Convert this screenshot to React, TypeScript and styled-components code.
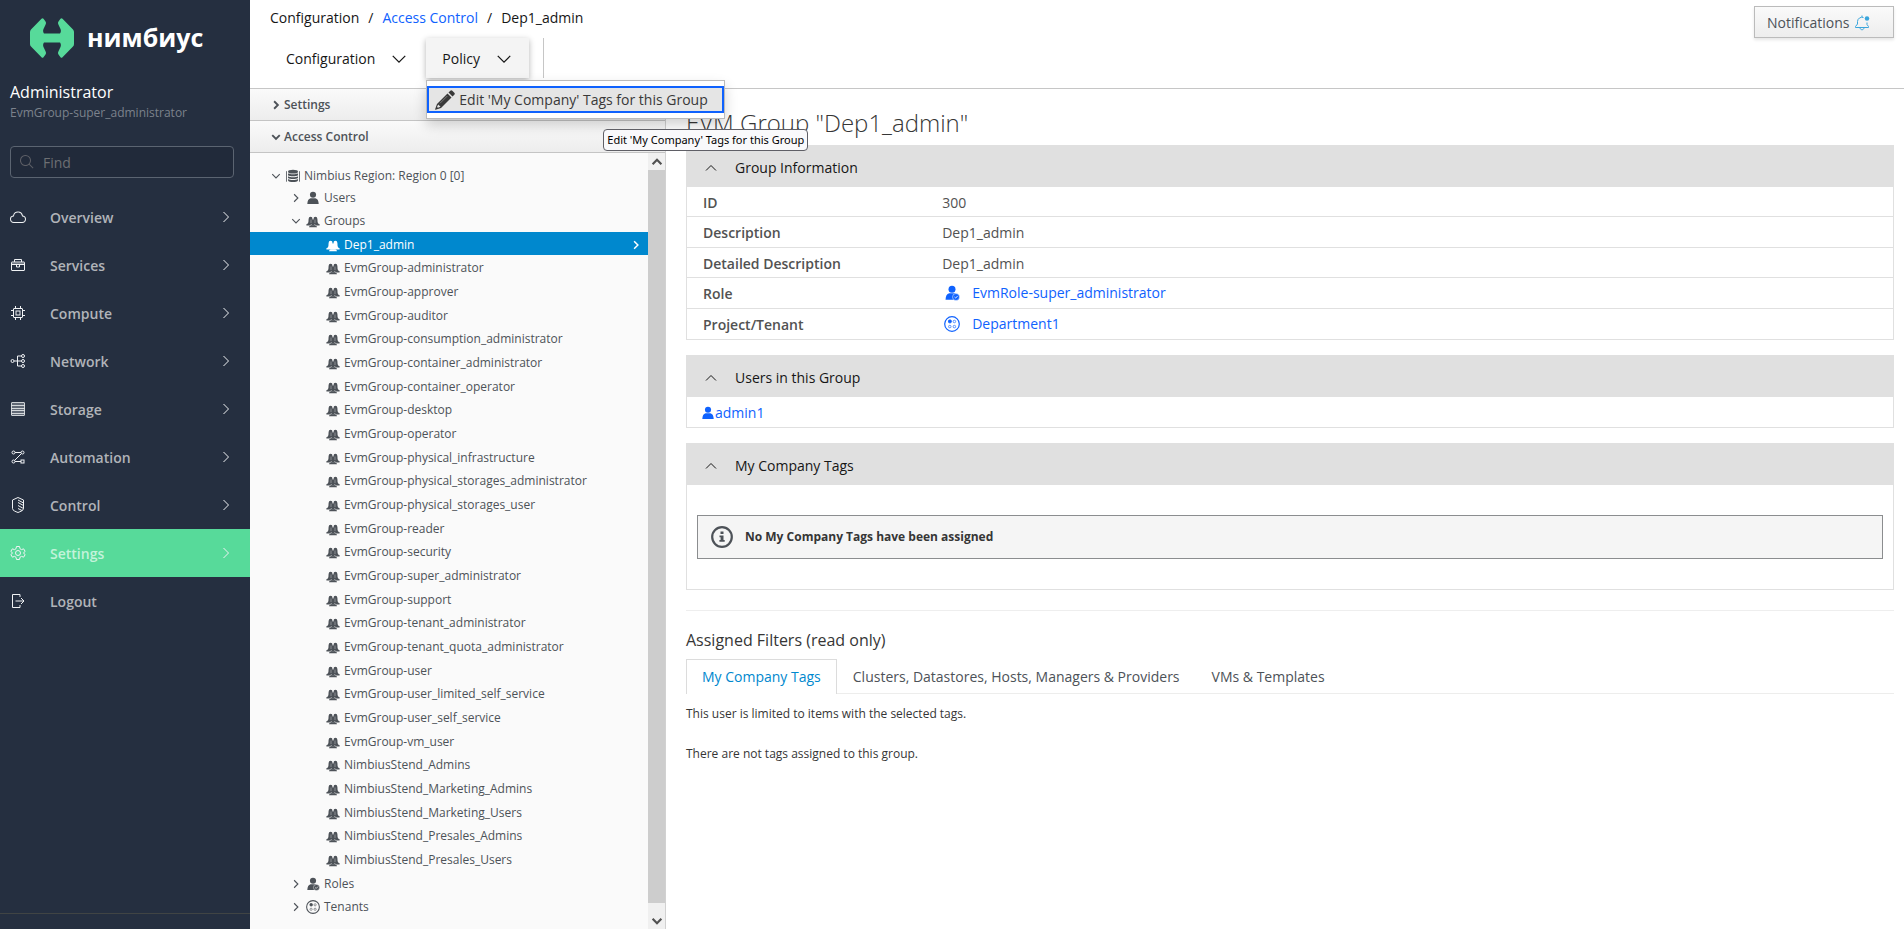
import React, { useState } from "react";
import styled, { createGlobalStyle, css } from "styled-components";

const GlobalStyle = createGlobalStyle`
  *, *::before, *::after { box-sizing: border-box; }
  body {
    margin: 0;
    background: #fff;
    color: #393f44;
    font-family: "Open Sans", sans-serif;
    font-size: 12px;
    line-height: 20px;
  }
  button, input { font: inherit; }
  h1, h2, ul, p, nav, ol { margin: 0; padding: 0; }
  ul, ol { list-style: none; }
  a { color: #0f62fe; text-decoration: none; }
  svg { display: block; flex: none; }
`;

/* ---------- icons ---------- */

type IconProps = { size?: number; className?: string };

const Icon = ({
  size = 16,
  box = 32,
  children,
}: IconProps & { box?: number; children: React.ReactNode }) => (
  <svg width={size} height={size} viewBox={`0 0 ${box} ${box}`} fill="none" stroke="none" aria-hidden="true">
    {children}
  </svg>
);

const line = { stroke: "currentColor", strokeWidth: 2, fill: "none" } as const;

const CloudIcon = () => (
  <Icon>
    <path
      fill="currentColor"
      d="M16,7a7.66,7.66,0,0,1,1.51.15,8,8,0,0,1,6.35,6.34l.26,1.35,1.35.24a5.5,5.5,0,0,1-1,10.92H7.5a5.5,5.5,0,0,1-1-10.92l1.34-.24.26-1.35A8,8,0,0,1,16,7m0-2a10,10,0,0,0-9.83,8.12A7.5,7.5,0,0,0,7.49,28h17a7.5,7.5,0,0,0,1.32-14.88A10,10,0,0,0,16,5Z"
    />
  </Icon>
);
const ToolboxIcon = () => (
  <Icon>
    <g {...line}>
      <rect x="3" y="10" width="26" height="17" rx="1" />
      <path d="M9 10V5h14v5M3 15h26M13 15v5h6v-5" />
      <path d="M3 12.500h26" strokeOpacity=".5" />
    </g>
  </Icon>
);
const ChipIcon = () => (
  <Icon>
    <g {...line}>
      <rect x="7" y="7" width="18" height="18" rx="1" />
      <rect x="12" y="12" width="8" height="8" />
      <path d="M11 7V2M21 7V2M11 30v-5M21 30v-5M7 11H2M7 21H2M30 11h-5M30 21h-5" />
    </g>
  </Icon>
);
const NetworkIcon = () => (
  <Icon>
    <g {...line}>
      <circle cx="5" cy="16" r="3" />
      <circle cx="26" cy="6" r="3" />
      <circle cx="26" cy="16" r="3" />
      <circle cx="26" cy="26" r="3" />
      <path d="M8 16h15M23 6h-8v20h8" />
    </g>
  </Icon>
);
const StorageIcon = () => (
  <Icon>
    <rect x="3" y="3" width="26" height="26" fill="currentColor" fillOpacity=".3" />
    <g {...line} strokeOpacity=".8">
      <rect x="3" y="3" width="26" height="26" rx="1" />
      <path d="M3 9h26M3 15h26M3 19h26M3 25h26" />
    </g>
  </Icon>
);
const FlowIcon = () => (
  <Icon>
    <g {...line}>
      <circle cx="7" cy="7" r="3" />
      <circle cx="25" cy="7" r="3" />
      <circle cx="7" cy="25" r="3" />
      <rect x="22" y="22" width="6" height="6" />
      <path d="M10 7h12M10 25h12M23 9L9 23" />
    </g>
  </Icon>
);
const ShieldIcon = () => (
  <Icon>
    <g {...line}>
      <path d="M16 1L5 6v17c0 4 6 6 11 8 5-2 11-4 11-8V6z" />
      <path d="M16 6l11 6M16 11l11 6M16 17l11 6M16 23l8 4" />
    </g>
  </Icon>
);
const GearIcon = () => (
  <Icon>
    <g {...line}>
      <path
        strokeLinejoin="round"
        d="M13 3h6l1 4.500 3 1.700 4.300-1.500 3 5.200-3.500 3.100 3.500 3.100-3 5.200L23 22.800 20 24.500 19 29h-6l-1-4.500-3-1.700-4.300 1.500-3-5.200L5.200 16 1.700 12.900l3-5.200L9 9.200l3-1.700z"
      />
      <circle cx="16" cy="16" r="5" />
    </g>
  </Icon>
);
const LogoutIcon = () => (
  <Icon>
    <path {...line} d="M20 8V3H5v26h15v-5M11 16h17M22 10l6 6-6 6" />
  </Icon>
);
const SearchIcon = () => (
  <Icon>
    <path
      fill="currentColor"
      d="M29,27.586l-7.552-7.552a11.018,11.018,0,1,0-1.414,1.414L27.586,29ZM4,13a9,9,0,1,1,9,9A9.01,9.01,0,0,1,4,13Z"
    />
  </Icon>
);

const turns = { right: 0, down: 90, up: -90 };
const Chevron = ({ dir, size = 16, weight = 2 }: { dir: keyof typeof turns; size?: number; weight?: number }) => (
  <Icon size={size}>
    <path
      d="M11 6l10 10-10 10"
      stroke="currentColor"
      strokeWidth={weight}
      transform={`rotate(${turns[dir]} 16 16)`}
    />
  </Icon>
);

const BellIcon = () => (
  <Icon>
    <path
      {...line}
      d="M19 5A9 9 0 0 0 7 13v5l-4 5v2h26v-2l-3-4V15M12 25c0 6 8 6 8 0M16 4V1"
    />
    <circle cx="26" cy="7" r="4.500" fill="currentColor" />
  </Icon>
);
const PencilIcon = () => (
  <Icon size={20} box={20}>
    <g fill="currentColor">
      <path d="M13.500 2.500L15.300.7q1-1 2 0l2 2q1 1 0 2L17.500 6.500z" />
      <path d="M12.500 3.500l4 4L6 18l-5.500 1.800L0 19.500 2 14z" />
    </g>
    <path d="M3.200 14.500l2.300 2.300-2.600 1-.9-.9z" fill="#e5e5e5" />
    <path d="M12.300 6L5 13.300" stroke="#8b8b8b" strokeWidth=".8" />
  </Icon>
);
const PersonShape = () => (
  <g fill="currentColor">
    <circle cx="8" cy="4.300" r="3.500" />
    <path d="M1.500 14.800c.2-3.800 1.300-5.900 3.700-6.500h5.600c2.400.6 3.500 2.700 3.700 6.500z" />
  </g>
);
const UserIcon = ({ size = 14 }: IconProps) => (
  <Icon size={size} box={16}>
    <PersonShape />
  </Icon>
);
const RoleIcon = ({ size = 14 }: IconProps) => (
  <Icon size={size} box={16}>
    <PersonShape />
    <circle cx="12" cy="12" r="3.500" fill="currentColor" stroke="#fff" strokeWidth=".5" />
    <path d="M10.500 12l1.200 1.100 2-2.200" stroke="#fff" strokeWidth=".8" />
  </Icon>
);
const GroupIcon = () => (
  <Icon size={14} box={14}>
    <g fill="currentColor">
      <path d="M2.600 5q0-2.300 2-2.300T6.500 5l.5 1 .5-1q0-2.300 1.900-2.300t2 2.300l.2 3q.1 1.700 2 2.200v1.300H.4v-1.300q1.900-.5 2-2.200z" />
      <path d="M3 13.200q0-1.400 2-1.900h4q2 .5 2 1.900z" />
    </g>
    <path d="M5 5.500v3.500M9 5.500v3.500M4 11.400l2-1.200M10 11.400l-2-1.200" stroke="#fff" strokeOpacity=".45" strokeWidth=".8" />
  </Icon>
);
const TenantIcon = ({ size = 14 }: IconProps) => (
  <Icon size={size} box={16}>
    <g stroke="currentColor">
      <circle cx="8" cy="8" r="7.300" strokeWidth="1.200" />
      <rect x="4.500" y="4" width="2.800" height="2.800" rx="1" fill="currentColor" />
      <g strokeOpacity=".75" strokeWidth=".9">
        <rect x="9.200" y="4.300" width="2.400" height="2.400" rx="1" />
        <rect x="4.600" y="9.400" width="2.400" height="2.400" rx="1" />
        <rect x="9.200" y="9.400" width="2.400" height="2.400" rx="1" />
      </g>
    </g>
  </Icon>
);
const RegionIcon = () => (
  <Icon size={14} box={16}>
    <g fill="currentColor">
      <ellipse cx="8" cy="3" rx="5.700" ry="2.200" />
      <path d="M2.300 4.800c2 1.700 9.400 1.700 11.400 0v2.300c-2 1.700-9.400 1.700-11.400 0z" />
      <path d="M2.300 8.200c2 1.700 9.400 1.700 11.400 0v2c-2 1.700-9.400 1.700-11.400 0z" />
      <path d="M2.300 11.300c2 1.700 9.400 1.700 11.400 0v1.800c-1 2.400-10.400 2.400-11.400 0z" />
    </g>
    <path d="M.5 2.500v12M15.500 2.500v12" stroke="currentColor" />
  </Icon>
);
const InfoIcon = () => (
  <Icon size={22} box={22}>
    <circle cx="11" cy="11" r="9.800" stroke="currentColor" strokeWidth="2.200" />
    <path d="M9.500 5.500h3v2.500h-3zM8.500 9.500h4V14h1.200v1.700H8.400V14h1.200v-2.800H8.500z" fill="currentColor" />
  </Icon>
);

/* ---------- sidebar ---------- */

const Page = styled.div`
  display: grid;
  grid-template-columns: 250px minmax(0, 1fr);
  min-height: 100vh;
`;
const Sidebar = styled.aside`
  display: flex;
  flex-direction: column;
  background: #252f40;
  color: #b1b4b9;
`;
const Brand = styled.a`
  display: flex;
  align-items: center;
  gap: 13px;
  height: 76px;
  padding-left: 30px;
  color: #fff;
  font-size: 25px;
  line-height: 40px;
  font-weight: 700;
`;
const BrandName = styled.span`
  padding-bottom: 2px;
`;
const Account = styled.div`
  height: 70px;
  padding: 4px 10px 0;
`;
const AccountName = styled.div`
  color: #fff;
  font-size: 16px;
  line-height: 24px;
`;
const AccountGroup = styled.div`
  color: #7c828c;
  font-size: 12px;
  line-height: 18px;
`;
const SearchBox = styled.label`
  display: flex;
  align-items: center;
  gap: 8px;
  height: 32px;
  margin: 0 16px 15px 10px;
  padding: 0 8px;
  border: 1px solid #5b6471;
  border-radius: 4px;
  background: #212a3a;
  color: #5d5f66;
`;
const SearchInput = styled.input`
  flex: 1;
  min-width: 0;
  padding: 1px 0 0;
  border: 0;
  outline: 0;
  background: none;
  color: #fff;
  font-size: 14px;
  &::placeholder { color: #6d6f73; opacity: 1; }
`;
const NavItem = styled.a<{ $active?: boolean }>`
  display: grid;
  grid-template-columns: 16px 1fr 16px;
  column-gap: 24px;
  align-items: center;
  height: 48px;
  padding: 0 16px 0 10px;
  font-size: 14px;
  font-weight: 600;
  color: ${(p) => (p.$active ? "#c3f3da" : "#b1b4b9")};
  background: ${(p) => (p.$active ? "#57da9a" : "transparent")};
  svg { color: #f0f2f4; }
  span { padding-top: 2px; }
`;
const SidebarFoot = styled.div`
  height: 16px;
  margin-top: auto;
  border-top: 1px solid #404444;
`;

const navItems: { label: string; icon: React.ReactNode; active?: boolean; leaf?: boolean }[] = [
  { label: "Overview", icon: <CloudIcon /> },
  { label: "Services", icon: <ToolboxIcon /> },
  { label: "Compute", icon: <ChipIcon /> },
  { label: "Network", icon: <NetworkIcon /> },
  { label: "Storage", icon: <StorageIcon /> },
  { label: "Automation", icon: <FlowIcon /> },
  { label: "Control", icon: <ShieldIcon /> },
  { label: "Settings", icon: <GearIcon />, active: true },
  { label: "Logout", icon: <LogoutIcon />, leaf: true },
];

const Logo = () => (
  <svg width="44" height="40" viewBox="0 0 44 40" aria-hidden="true">
    <path
      fill="#57da9a"
      d="M0 14Q0 12.500 1 11.500L11.500.8q1-1 2 0l2 2.600q1 1.600 0 3.400l-2 4.200q-1 2.500.5 4.500h16q1.500-2 .5-4.500l-2-4.200q-1-1.800 0-3.400l2-2.600q1-1 2 0L43 11.500q1 1 1 2.500v12q0 1.500-1 2.500L32.500 39.200q-1 1-2 0l-2-2.600q-1-1.600 0-3.400l2-4.200q1-2.500-.5-4.500H14q-1.500 2-.5 4.500l2 4.200q1 1.800 0 3.400l-2 2.600q-1 1-2 0L1 28.500q-1-1-1-2.500z"
    />
  </svg>
);

/* ---------- top bar ---------- */

const Workspace = styled.div`
  display: flex;
  flex-direction: column;
  min-width: 0;
`;
const TopBar = styled.header`
  display: flex;
  justify-content: space-between;
  align-items: flex-start;
  height: 89px;
  padding: 6px 10px 0 20px;
  border-bottom: 1px solid #c6c6c6;
`;
const Crumbs = styled.ol`
  display: flex;
  gap: 9px;
  padding-top: 2px;
  font-size: 14px;
  color: #161616;
`;
const Toolbar = styled.div`
  display: flex;
  gap: 2px;
  height: 40px;
  margin-top: 10px;
`;
const ToolButton = styled.button<{ $open?: boolean }>`
  display: flex;
  align-items: center;
  gap: 14px;
  height: 40px;
  padding: 2px 15px 0 16px;
  border: 0;
  background: ${(p) => (p.$open ? "#f4f4f4" : "transparent")};
  color: #161616;
  font-size: 14px;
  ${(p) => p.$open && css`box-shadow: 0 2px 6px rgba(0, 0, 0, 0.3);`}
`;
const MenuAnchor = styled.div`
  position: relative;
  margin-right: 12px;
`;
const Menu = styled.div`
  position: absolute;
  top: 42px;
  left: 0;
  z-index: 2;
  padding: 5px 0;
  border: 1px solid #bbb;
  background: #fff;
  box-shadow: 0 6px 12px rgba(0, 0, 0, 0.18);
`;
const MenuItem = styled.button`
  display: flex;
  align-items: center;
  gap: 4px;
  height: 27px;
  padding: 0 14px 0 6px;
  border: 2px solid #0f62fe;
  background: #e5e5e5;
  color: #393939;
  font-size: 14px;
  white-space: nowrap;
`;
const Tooltip = styled.div`
  position: absolute;
  top: 91px;
  left: 177px;
  z-index: 3;
  padding: 0 3px;
  border: 1px solid #5f5f66;
  border-radius: 4px;
  background: #f9f9fb;
  color: #000;
  font-family: "Noto Sans", "Open Sans", sans-serif;
  font-size: 11px;
  white-space: nowrap;
`;
const ToolDivider = styled.div`
  width: 1px;
  background: #c6c6c6;
`;
const Notifications = styled.button`
  display: flex;
  align-items: center;
  gap: 5px;
  width: 140px;
  height: 32px;
  padding: 2px 12px 0;
  border: 1px solid #bbb;
  background: linear-gradient(#fafafa, #ededed);
  box-shadow: 0 2px 3px rgba(3, 3, 3, 0.1);
  color: #4d5258;
  font-size: 14px;
  svg { color: #39a5dc; }
`;

/* ---------- explorer ---------- */

const Split = styled.div`
  flex: 1;
  display: grid;
  grid-template-columns: 416px minmax(0, 1fr);
`;
const Explorer = styled.section`
  display: flex;
  flex-direction: column;
  border-right: 1px solid #d1d1d1;
  background: #fafafa;
  color: #4d5258;
`;
const AccordionHead = styled.button`
  display: flex;
  align-items: center;
  gap: 2px;
  height: 32px;
  padding: 0 20px;
  border: 0;
  border-bottom: 1px solid #c4c4c4;
  background: linear-gradient(#fafafa, #ededed);
  color: #4d5258;
  font-size: 12px;
  font-weight: 600;
`;
const TreePane = styled.div`
  flex: 1;
  display: grid;
  grid-template-columns: minmax(0, 1fr) 17px;
`;
const Tree = styled.ul`
  padding: 11px 0;
`;
const Row = styled.div<{ $level: number; $tall?: boolean; $selected?: boolean }>`
  display: flex;
  align-items: center;
  gap: 4px;
  height: ${(p) => (p.$tall ? "24px" : "100%")};
  min-height: 22px;
  padding: 2px 6px 0 ${(p) => 20 + p.$level * 20}px;
  ${(p) => p.$selected && css`background: #0088ce; color: #fff;`}
`;
const RowLabel = styled.span`
  flex: 1;
  white-space: nowrap;
`;
const ToggleSlot = styled.span`
  display: flex;
  width: 12px;
`;
const GroupRows = styled.ul`
  display: grid;
  grid-auto-rows: 23px 24px 24px;
`;
const ScrollTrack = styled.div`
  display: flex;
  flex-direction: column;
  align-items: center;
  background: #f0f0f0;
  color: #505050;
`;
const ScrollEnd = styled.div`
  display: flex;
  align-items: center;
  height: 17px;
`;
const ScrollThumb = styled.div`
  flex: 1;
  width: 100%;
  margin-bottom: 9px;
  background: #cdcdcd;
`;

const groups = [
  "Dep1_admin",
  "EvmGroup-administrator",
  "EvmGroup-approver",
  "EvmGroup-auditor",
  "EvmGroup-consumption_administrator",
  "EvmGroup-container_administrator",
  "EvmGroup-container_operator",
  "EvmGroup-desktop",
  "EvmGroup-operator",
  "EvmGroup-physical_infrastructure",
  "EvmGroup-physical_storages_administrator",
  "EvmGroup-physical_storages_user",
  "EvmGroup-reader",
  "EvmGroup-security",
  "EvmGroup-super_administrator",
  "EvmGroup-support",
  "EvmGroup-tenant_administrator",
  "EvmGroup-tenant_quota_administrator",
  "EvmGroup-user",
  "EvmGroup-user_limited_self_service",
  "EvmGroup-user_self_service",
  "EvmGroup-vm_user",
  "NimbiusStend_Admins",
  "NimbiusStend_Marketing_Admins",
  "NimbiusStend_Marketing_Users",
  "NimbiusStend_Presales_Admins",
  "NimbiusStend_Presales_Users",
];

type NodeProps = {
  level: number;
  icon: React.ReactNode;
  label: string;
  toggle?: "right" | "down";
  tall?: boolean;
  selected?: boolean;
};
const TreeNode = ({ level, icon, label, toggle, tall, selected }: NodeProps) => (
  <Row $level={level} $tall={tall} $selected={selected}>
    <ToggleSlot>{toggle && <Chevron dir={toggle} size={12} weight={3} />}</ToggleSlot>
    {icon}
    <RowLabel>{label}</RowLabel>
    {selected && <Chevron dir="right" size={12} weight={4} />}
  </Row>
);

/* ---------- main content ---------- */

const Content = styled.main`
  padding: 14px 10px 20px 20px;
`;
const Title = styled.h1`
  margin-bottom: 2px;
  color: #363636;
  font-size: 24px;
  line-height: 40px;
  font-weight: 300;
`;
const Card = styled.section`
  margin-bottom: 15px;
  border: 1px solid #e0e0e0;
  border-top: 0;
`;
const CardHead = styled.button`
  display: flex;
  align-items: center;
  gap: 16px;
  width: 100%;
  height: 42px;
  padding: 3px 16px 0;
  border: 0;
  background: #e0e0e0;
  color: #161616;
  font-size: 14px;
`;
const DataTable = styled.table`
  width: 100%;
  border-collapse: separate;
  border-spacing: 0;
  font-size: 14px;
  color: #525252;
  th, td {
    height: 31px;
    padding: 2px 14px 0;
    border-bottom: 1px solid #e0e0e0;
    text-align: left;
  }
  th { width: 20%; padding-left: 16px; font-weight: 600; }
  tr:nth-child(odd) > * { height: 30px; }
  tr:last-child > * { border-bottom: 0; }
`;
const FactLink = styled.a`
  display: flex;
  align-items: center;
  gap: 12px;
  padding: 0 0 2px 2px;
`;
const UserLink = styled.a`
  display: flex;
  align-items: center;
`;
const EmptyBody = styled.div`
  padding: 30px 10px;
`;
const Notice = styled.div`
  display: flex;
  align-items: center;
  gap: 12px;
  height: 44px;
  padding: 0 13px;
  border: 1px solid #8b8d8f;
  background: #f5f5f5;
  color: #4d5258;
`;
const NoticeText = styled.strong`
  color: #363636;
  font-weight: 700;
`;
const Rule = styled.hr`
  margin: 20px 0 17px;
  border: 0;
  border-top: 1px solid #eee;
`;
const SubTitle = styled.h2`
  margin-bottom: 7px;
  color: #363636;
  font-size: 16px;
  line-height: 24px;
  font-weight: 400;
`;
const Tabs = styled.div`
  display: flex;
  height: 35px;
  border-bottom: 1px solid #ededec;
`;
const Tab = styled.button<{ $active?: boolean }>`
  height: 35px;
  padding: 0 15px;
  border: 1px solid transparent;
  border-bottom: 0;
  background: none;
  color: #4d5258;
  font-size: 14px;
  ${(p) =>
    p.$active &&
    css`
      border-color: #dcdcdc;
      background: #fff;
      color: #0088ce;
    `}
`;
const Note = styled.p`
  margin: 10px 0 20px;
  color: #363636;
`;

const facts: [string, React.ReactNode][] = [
  ["ID", "300"],
  ["Description", "Dep1_admin"],
  ["Detailed Description", "Dep1_admin"],
  [
    "Role",
    <FactLink href="#role" key="role">
      <RoleIcon size={16} />
      EvmRole-super_administrator
    </FactLink>,
  ],
  [
    "Project/Tenant",
    <FactLink href="#tenant" key="tenant">
      <TenantIcon size={16} />
      Department1
    </FactLink>,
  ],
];

const tabNames = ["My Company Tags", "Clusters, Datastores, Hosts, Managers & Providers", "VMs & Templates"];

export default function App() {
  const [tab, setTab] = useState(tabNames[0]);
  return (
    <>
      <GlobalStyle />
      <Page>
        <Sidebar>
          <Brand href="#home">
            <Logo />
            <BrandName>нимбиус</BrandName>
          </Brand>
          <Account>
            <AccountName>Administrator</AccountName>
            <AccountGroup>EvmGroup-super_administrator</AccountGroup>
          </Account>
          <SearchBox>
            <SearchIcon />
            <SearchInput type="search" placeholder="Find" aria-label="Find" />
          </SearchBox>
          <nav>
            {navItems.map((item) => (
              <NavItem key={item.label} href={`#${item.label}`} $active={item.active}>
                {item.icon}
                <span>{item.label}</span>
                {!item.leaf && <Chevron dir="right" />}
              </NavItem>
            ))}
          </nav>
          <SidebarFoot />
        </Sidebar>

        <Workspace>
          <TopBar>
            <div>
              <Crumbs>
                <li>Configuration</li>
                <li>/</li>
                <li>
                  <a href="#access">Access Control</a>
                </li>
                <li>/</li>
                <li>Dep1_admin</li>
              </Crumbs>
              <Toolbar>
                <ToolButton>
                  Configuration
                  <Chevron dir="down" size={20} />
                </ToolButton>
                <MenuAnchor>
                  <ToolButton $open aria-expanded="true">
                    Policy
                    <Chevron dir="down" size={20} />
                  </ToolButton>
                  <Menu role="menu">
                    <MenuItem role="menuitem">
                      <PencilIcon />
                      Edit 'My Company' Tags for this Group
                    </MenuItem>
                  </Menu>
                  <Tooltip role="tooltip">Edit 'My Company' Tags for this Group</Tooltip>
                </MenuAnchor>
                <ToolDivider />
              </Toolbar>
            </div>
            <Notifications>
              Notifications
              <BellIcon />
            </Notifications>
          </TopBar>

          <Split>
            <Explorer>
              <AccordionHead>
                <Chevron dir="right" size={12} weight={5} />
                Settings
              </AccordionHead>
              <AccordionHead>
                <Chevron dir="down" size={12} weight={5} />
                Access Control
              </AccordionHead>
              <TreePane>
                <Tree>
                  <li>
                    <TreeNode level={0} toggle="down" icon={<RegionIcon />} label="Nimbius Region: Region 0 [0]" />
                  </li>
                  <li>
                    <TreeNode level={1} toggle="right" icon={<UserIcon />} label="Users" />
                  </li>
                  <li>
                    <TreeNode level={1} toggle="down" icon={<GroupIcon />} label="Groups" tall />
                    <GroupRows>
                      {groups.map((name, i) => (
                        <li key={name}>
                          <TreeNode level={2} icon={<GroupIcon />} label={name} selected={i === 0} />
                        </li>
                      ))}
                    </GroupRows>
                  </li>
                  <li>
                    <TreeNode level={1} toggle="right" icon={<RoleIcon />} label="Roles" tall />
                  </li>
                  <li>
                    <TreeNode level={1} toggle="right" icon={<TenantIcon />} label="Tenants" />
                  </li>
                </Tree>
                <ScrollTrack aria-hidden="true">
                  <ScrollEnd>
                    <Chevron dir="up" size={14} weight={5} />
                  </ScrollEnd>
                  <ScrollThumb />
                  <ScrollEnd>
                    <Chevron dir="down" size={14} weight={5} />
                  </ScrollEnd>
                </ScrollTrack>
              </TreePane>
            </Explorer>

            <Content>
              <Title>EVM Group "Dep1_admin"</Title>
              <Card>
                <CardHead>
                  <Chevron dir="up" />
                  Group Information
                </CardHead>
                <DataTable>
                  <tbody>
                    {facts.map(([name, value]) => (
                      <tr key={name}>
                        <th scope="row">{name}</th>
                        <td>{value}</td>
                      </tr>
                    ))}
                  </tbody>
                </DataTable>
              </Card>
              <Card>
                <CardHead>
                  <Chevron dir="up" />
                  Users in this Group
                </CardHead>
                <DataTable>
                  <tbody>
                    <tr>
                      <td>
                        <UserLink href="#admin1">
                          <UserIcon />
                          admin1
                        </UserLink>
                      </td>
                    </tr>
                  </tbody>
                </DataTable>
              </Card>
              <Card>
                <CardHead>
                  <Chevron dir="up" />
                  My Company Tags
                </CardHead>
                <EmptyBody>
                  <Notice>
                    <InfoIcon />
                    <NoticeText>No My Company Tags have been assigned</NoticeText>
                  </Notice>
                </EmptyBody>
              </Card>
              <Rule />
              <SubTitle>Assigned Filters (read only)</SubTitle>
              <Tabs role="tablist">
                {tabNames.map((name) => (
                  <Tab
                    key={name}
                    role="tab"
                    aria-selected={tab === name}
                    $active={tab === name}
                    onClick={() => setTab(name)}
                  >
                    {name}
                  </Tab>
                ))}
              </Tabs>
              <Note>This user is limited to items with the selected tags.</Note>
              <Note>There are not tags assigned to this group.</Note>
            </Content>
          </Split>
        </Workspace>
      </Page>
    </>
  );
}
